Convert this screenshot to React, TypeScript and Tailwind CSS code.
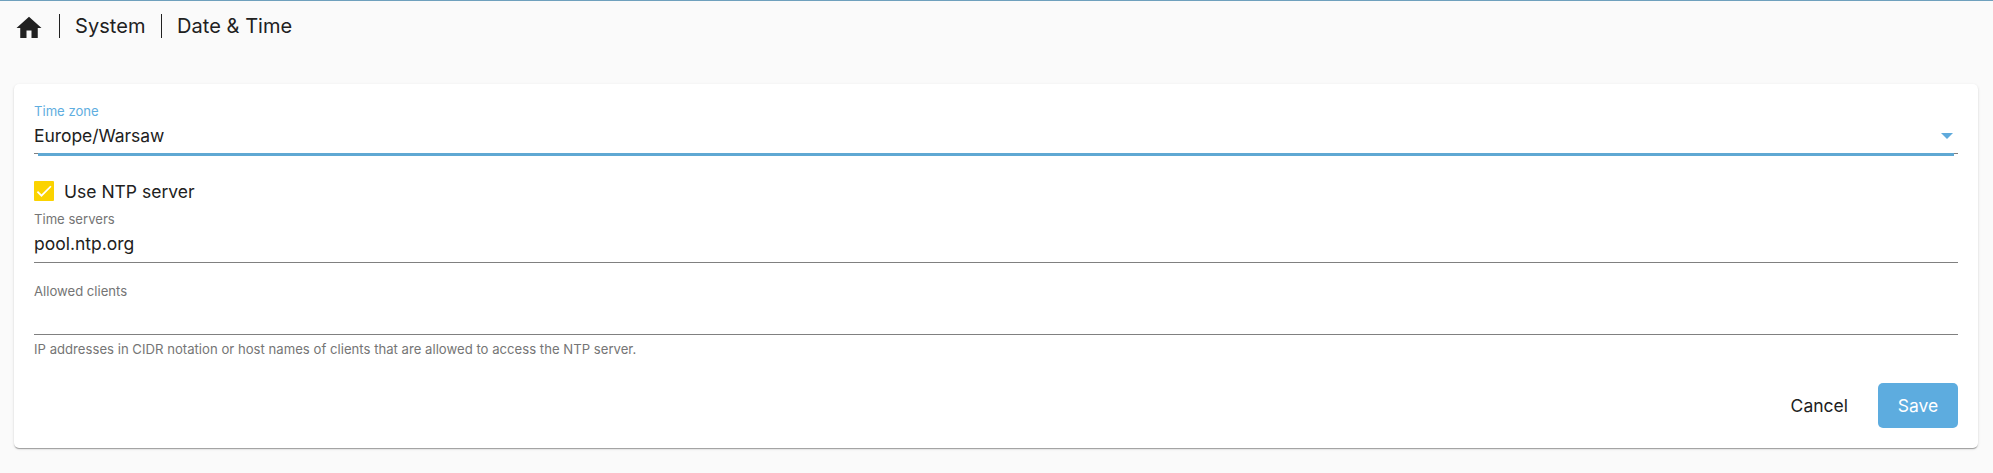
type FieldProps = {
  label: string;
  value?: string;
};

function Field({ label, value }: FieldProps) {
  return (
    <div className="h-[54px] border-b border-[#808080]">
      <div className="pt-[2px] text-[13.125px] leading-[16px] text-[#757575]">{label}</div>
      <div className="mt-[7px] text-[17.5px] leading-[20px]">{value}</div>
    </div>
  );
}

function TimeZoneSelect() {
  return (
    <div className="relative h-[51px] border-b border-[#808080]">
      <div className="text-[13.125px] leading-[16px] text-[#5faee0]">Time zone</div>
      <div className="mt-[7px] flex items-center justify-between pr-[5px] text-[17.5px] leading-[20px] tracking-[-0.06px]">
        <span>Europe/Warsaw</span>
        <svg width="12" height="6" viewBox="0 0 12 6">
          <path d="M0 0h12L6 6z" fill="#5faadc" />
        </svg>
      </div>
      <div className="absolute inset-x-1 -bottom-[3px] h-[3px] bg-[#5fa8d3]" />
    </div>
  );
}

function Breadcrumb() {
  return (
    <nav className="flex h-[50px] items-start pt-[11px] pl-[14px] text-[20px] leading-[28px] tracking-[0.05px]">
      <svg width="30" height="30" viewBox="0 0 24 24" className="mt-px">
        <path d="M10,20V14H14V20H19V12H22L12,3L2,12H5V20H10Z" fill="#212121" />
      </svg>
      <span className="mt-[2px] ml-[15px] h-[24px] w-px bg-[#212121]" />
      <span className="ml-[15px] w-[71px]">System</span>
      <span className="mt-[2px] ml-[15px] h-[24px] w-px bg-[#212121]" />
      <span className="ml-[15px]">Date &amp; Time</span>
    </nav>
  );
}

export default function App() {
  return (
    <div className="h-[473px] overflow-hidden border-t border-[#6fa0bd] bg-[#fafafa] font-['Inter',sans-serif] text-[#212121]">
      <Breadcrumb />
      <main className="mt-[33px] mr-[15px] ml-[14px] h-[364px] rounded-[5px] bg-white px-5 pt-[19px] shadow-[0_2px_1px_-1px_rgba(0,0,0,0.2),0_1px_1px_0_rgba(0,0,0,0.14),0_1px_3px_0_rgba(0,0,0,0.12)]">
        <TimeZoneSelect />
        <label className="mt-[27px] flex h-[20px] items-center gap-[10px] text-[17.5px] leading-[20px]">
          <span className="flex size-[20px] items-center justify-center rounded-[1px] bg-[#fbd300]">
            <svg width="20" height="20" viewBox="0 0 24 24" fill="none">
              <path d="M4.1 12.7 9 17.6 20.3 6.3" stroke="#fff" strokeWidth="2.1" />
            </svg>
          </span>
          <span className="pt-[2px]">Use NTP server</span>
        </label>
        <div className="mt-[8px]">
          <Field label="Time servers" value="pool.ntp.org" />
        </div>
        <div className="mt-[18px]">
          <Field label="Allowed clients" />
        </div>
        <p className="mt-[6px] text-[13.125px] leading-[16px] tracking-[0.02px] text-[#757575]">
          IP addresses in CIDR notation or host names of clients that are allowed to access the NTP server.
        </p>
        <div className="mt-[26px] flex h-[45px] items-center justify-end text-[17.5px]">
          <button className="h-[45px] px-5 pt-[2px]">Cancel</button>
          <button className="ml-[10px] h-[45px] w-[80px] rounded-[5px] bg-[#5dacdf] pt-[2px] text-white">Save</button>
        </div>
      </main>
    </div>
  );
}
